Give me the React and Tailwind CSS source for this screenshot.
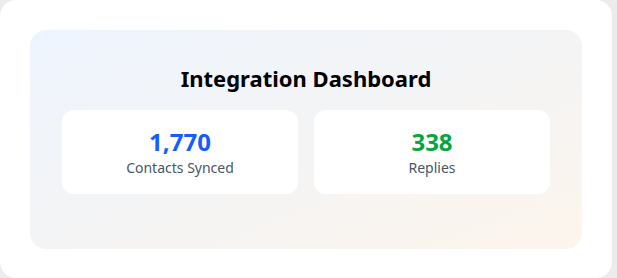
export default function App() {
  const stats = [
    { value: '1,770', label: 'Contacts Synced', color: 'text-blue-600' },
    { value: '338', label: 'Replies', color: 'text-green-600' },
  ];

  return (
    <div className="w-[617px] h-[278px] bg-[#ececec] overflow-hidden" style={{ fontFamily: '"Noto Sans", "Open Sans", sans-serif' }}>
      <div className="w-[612px] h-[278px] bg-white rounded-2xl p-[30px]">
        {/* Gradient panel */}
        <div className="h-[219px] rounded-2xl bg-linear-to-br from-[#eef4fe] via-[#f4f4f5] to-[#fdf5ec] px-8 pt-8">
          <h1 className="text-center text-[22px] leading-8 font-bold text-black mb-4">
            Integration Dashboard
          </h1>
          <div className="grid grid-cols-2 gap-4">
            {stats.map((s) => (
              <div key={s.label} className="bg-white rounded-xl pt-4 pb-4 text-center">
                <div className={`text-2xl leading-8 font-bold ${s.color}`}>{s.value}</div>
                <div className="text-sm leading-5 text-gray-600">{s.label}</div>
              </div>
            ))}
          </div>
        </div>
      </div>
    </div>
  );
}
